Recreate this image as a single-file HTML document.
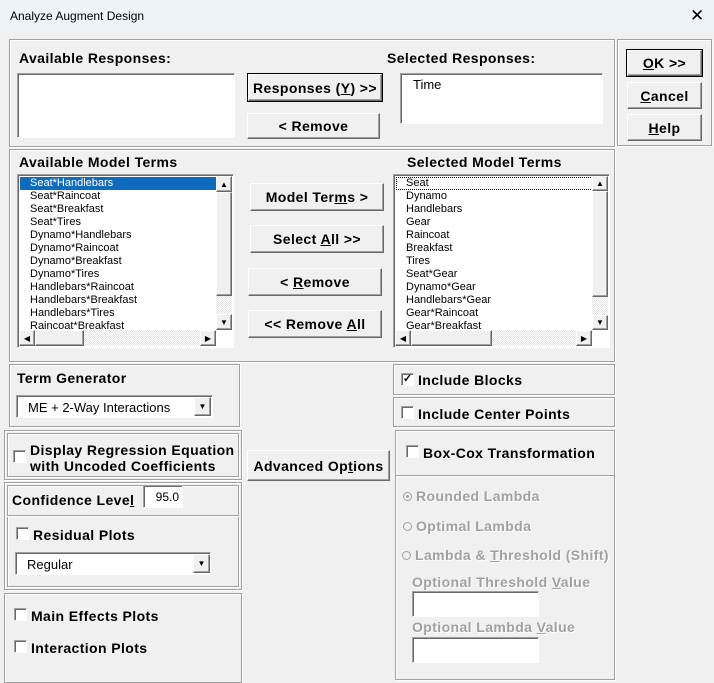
<!DOCTYPE html>
<html><head><meta charset="utf-8"><style>
*{box-sizing:border-box}
body{margin:0;width:714px;height:675px;background:#f0f0f0;font-family:"Liberation Sans",sans-serif;position:relative;overflow:hidden}
.a{position:absolute;white-space:nowrap}
.title{left:0;top:0;width:714px;height:33px;background:#eef3f8;font-size:12px;color:#000;padding:9px 0 0 10px}
.fr{position:absolute;border:1px solid #a0a0a0;box-shadow:inset 1px 1px 0 #fff,1px 1px 0 #fff}
.b{font-weight:bold;font-size:14px;letter-spacing:0.4px}
.btn{position:absolute;background:#f0f0f0;border:1px solid;border-color:#fff #696969 #696969 #fff;box-shadow:inset -1px -1px 0 #a0a0a0;font-weight:bold;font-size:14px;letter-spacing:0.4px;text-align:center;display:flex;align-items:center;justify-content:center;white-space:pre}
.def{outline:1px solid #000}
.fld{position:absolute;background:#fff;border:1px solid;border-color:#a0a0a0 #fff #fff #a0a0a0;box-shadow:inset 1px 1px 0 #696969}
.li{font-size:11px;line-height:13px;padding-left:10px;white-space:nowrap;height:13px}
.sel{background:#0f6cbd;color:#fff}
.sb{position:absolute;background:#f0f0f0;border:1px solid;border-color:#fff #696969 #696969 #fff;box-shadow:inset -1px -1px 0 #a0a0a0;font-size:8px;display:flex;align-items:center;justify-content:center}
.trk{position:absolute;background:repeating-conic-gradient(#fff 0 25%,#e4e4e4 0 50%) 0 0/2px 2px}
.cb{position:absolute;width:13px;height:13px;background:#fff;border:1px solid;border-color:#a0a0a0 #fff #fff #a0a0a0;box-shadow:inset 1px 1px 0 #696969;font-size:11px;line-height:11px;text-align:center}
.dis{color:#a0a0a0;font-weight:bold;font-size:14px;letter-spacing:0.4px;text-shadow:1px 1px 0 #fff}
.rd{display:inline-block;width:9px;height:9px;border-radius:50%;border:1px solid #a0a0a0;background:#f0f0f0;margin-right:4px;vertical-align:0px;position:relative}
.rd.on::after{content:"";position:absolute;left:2px;top:2px;width:3px;height:3px;border-radius:50%;background:#a0a0a0}
u{text-decoration:underline}
</style></head><body>
<div class="a title">Analyze Augment Design</div>
<div class="a" style="left:690px;top:6px;font-size:17px">✕</div>

<div class="fr" style="left:9px;top:39px;width:606px;height:108px"></div>
<div class="a b" style="left:19px;top:50px">Available Responses:</div>
<div class="fld" style="left:17px;top:73px;width:218px;height:65px"></div>
<div class="btn def" style="left:248px;top:74px;width:134px;height:27px"><span>Responses (<u>Y</u>) &gt;&gt;</span></div>
<div class="btn" style="left:247px;top:113px;width:133px;height:26px"><span>&lt; Remove</span></div>
<div class="a b" style="left:387px;top:50px">Selected Responses:</div>
<div class="fld" style="left:400px;top:73px;width:203px;height:51px"><div style="font-size:13px;padding:3px 0 0 12px">Time</div></div>

<div class="fr" style="left:617px;top:39px;width:95px;height:107px"></div>
<div class="btn def" style="left:627px;top:50px;width:75px;height:26px"><span><u>O</u>K &gt;&gt;</span></div>
<div class="btn" style="left:627px;top:82px;width:75px;height:27px"><span><u>C</u>ancel</span></div>
<div class="btn" style="left:627px;top:114px;width:75px;height:27px"><span><u>H</u>elp</span></div>

<div class="fr" style="left:9px;top:149px;width:606px;height:213px"></div>
<div class="a b" style="left:19px;top:154px">Available Model Terms</div>
<div class="fld" style="left:17px;top:174px;width:217px;height:174px;overflow:hidden;padding:2px">
<div class="li sel" style="width:197px">Seat*Handlebars</div>
<div class="li">Seat*Raincoat</div><div class="li">Seat*Breakfast</div><div class="li">Seat*Tires</div>
<div class="li">Dynamo*Handlebars</div><div class="li">Dynamo*Raincoat</div><div class="li">Dynamo*Breakfast</div>
<div class="li">Dynamo*Tires</div><div class="li">Handlebars*Raincoat</div><div class="li">Handlebars*Breakfast</div>
<div class="li">Handlebars*Tires</div><div class="li">Raincoat*Breakfast</div>
</div>
<div class="trk" style="left:216px;top:176px;width:16px;height:154px"></div>
<div class="sb" style="left:216px;top:176px;width:16px;height:16px">▲</div>
<div class="sb" style="left:216px;top:192px;width:16px;height:104px"></div>
<div class="sb" style="left:216px;top:314px;width:16px;height:16px">▼</div>
<div class="trk" style="left:19px;top:330px;width:197px;height:16px"></div>
<div class="sb" style="left:19px;top:330px;width:16px;height:16px">◀</div>
<div class="sb" style="left:35px;top:330px;width:49px;height:16px"></div>
<div class="sb" style="left:200px;top:330px;width:16px;height:16px">▶</div>

<div class="btn" style="left:250px;top:183px;width:134px;height:28px"><span>Model Ter<u>m</u>s &gt;</span></div>
<div class="btn" style="left:250px;top:225px;width:134px;height:28px"><span>Select <u>A</u>ll &gt;&gt;</span></div>
<div class="btn" style="left:248px;top:268px;width:134px;height:28px"><span>&lt; <u>R</u>emove</span></div>
<div class="btn" style="left:248px;top:310px;width:134px;height:28px"><span>&lt;&lt; Remove <u>A</u>ll</span></div>

<div class="a b" style="left:407px;top:154px">Selected Model Terms</div>
<div class="fld" style="left:393px;top:174px;width:217px;height:174px;overflow:hidden;padding:2px">
<div class="li" style="outline:1px dotted #000;outline-offset:-1px;width:197px">Seat</div>
<div class="li">Dynamo</div><div class="li">Handlebars</div><div class="li">Gear</div><div class="li">Raincoat</div>
<div class="li">Breakfast</div><div class="li">Tires</div><div class="li">Seat*Gear</div><div class="li">Dynamo*Gear</div>
<div class="li">Handlebars*Gear</div><div class="li">Gear*Raincoat</div><div class="li">Gear*Breakfast</div>
</div>
<div class="trk" style="left:592px;top:176px;width:16px;height:154px"></div>
<div class="sb" style="left:592px;top:176px;width:16px;height:15px">▲</div>
<div class="sb" style="left:592px;top:191px;width:16px;height:106px"></div>
<div class="sb" style="left:592px;top:315px;width:16px;height:15px">▼</div>
<div class="trk" style="left:395px;top:330px;width:197px;height:16px"></div>
<div class="sb" style="left:395px;top:330px;width:16px;height:16px">◀</div>
<div class="sb" style="left:411px;top:330px;width:81px;height:16px"></div>
<div class="sb" style="left:576px;top:330px;width:16px;height:16px">▶</div>

<div class="fr" style="left:9px;top:364px;width:231px;height:63px"></div>
<div class="a b" style="left:17px;top:370px">Term Generator</div>
<div class="fld" style="left:16px;top:395px;width:197px;height:23px"><div style="font-size:13px;padding:4px 0 0 11px">ME + 2-Way Interactions</div></div>
<div class="sb" style="left:194px;top:397px;width:17px;height:19px">▼</div>

<div class="fr" style="left:393px;top:364px;width:222px;height:31px"></div>
<div class="cb" style="left:401px;top:373px;font-weight:bold">✓</div>
<div class="a b" style="left:418px;top:372px">Include Blocks</div>
<div class="fr" style="left:393px;top:397px;width:222px;height:30px"></div>
<div class="cb" style="left:401px;top:406px"></div>
<div class="a b" style="left:418px;top:406px">Include Center Points</div>

<div class="fr" style="left:4px;top:430px;width:238px;height:50px"></div>
<div class="fr" style="left:7px;top:433px;width:232px;height:44px"></div>
<div class="cb" style="left:13px;top:450px"></div>
<div class="a b" style="left:30px;top:442px;line-height:16px">Display Regression Equation<br>with Uncoded Coefficients</div>
<div class="btn" style="left:247px;top:450px;width:143px;height:31px"><span>Advanced Op<u>t</u>ions</span></div>

<div class="fr" style="left:4px;top:482px;width:238px;height:108px"></div>
<div class="fr" style="left:7px;top:485px;width:232px;height:102px"></div>
<div style="position:absolute;left:7px;top:515px;width:232px;border-top:1px solid #a0a0a0;border-bottom:1px solid #fff"></div>
<div class="a b" style="left:12px;top:492px">Confidence Leve<u>l</u></div>
<div class="fld" style="left:143px;top:485px;width:40px;height:23px"><div style="font-size:12px;text-align:right;padding:4px 3px 0 0">95.0</div></div>
<div class="cb" style="left:16px;top:527px"></div>
<div class="a b" style="left:33px;top:527px">Residual Plots</div>
<div class="fld" style="left:15px;top:552px;width:196px;height:23px"><div style="font-size:13px;padding:4px 0 0 11px">Regular</div></div>
<div class="sb" style="left:193px;top:554px;width:17px;height:19px">▼</div>

<div class="fr" style="left:4px;top:593px;width:238px;height:90px"></div>
<div class="cb" style="left:14px;top:608px"></div>
<div class="a b" style="left:31px;top:608px">Main Effects Plots</div>
<div class="cb" style="left:14px;top:640px"></div>
<div class="a b" style="left:31px;top:640px">Interaction Plots</div>

<div class="fr" style="left:395px;top:430px;width:220px;height:250px"></div>
<div style="position:absolute;left:396px;top:475px;width:218px;border-top:1px solid #a0a0a0;border-bottom:1px solid #fff"></div>
<div class="cb" style="left:406px;top:445px"></div>
<div class="a b" style="left:423px;top:445px">Box-Cox Transformation</div>
<div class="a dis" style="left:403px;top:488px"><span class="rd on"></span>Rounded Lambda</div>
<div class="a dis" style="left:403px;top:518px"><span class="rd"></span>Optimal Lambda</div>
<div class="a dis" style="left:402px;top:547px"><span class="rd"></span>Lambda &amp; <u>T</u>hreshold (Shift)</div>
<div class="a dis" style="left:412px;top:574px">Optional Threshold <u>V</u>alue</div>
<div class="fld" style="left:412px;top:591px;width:127px;height:26px"></div>
<div class="a dis" style="left:412px;top:619px">Optional Lambda <u>V</u>alue</div>
<div class="fld" style="left:412px;top:637px;width:127px;height:26px"></div>
</body></html>
